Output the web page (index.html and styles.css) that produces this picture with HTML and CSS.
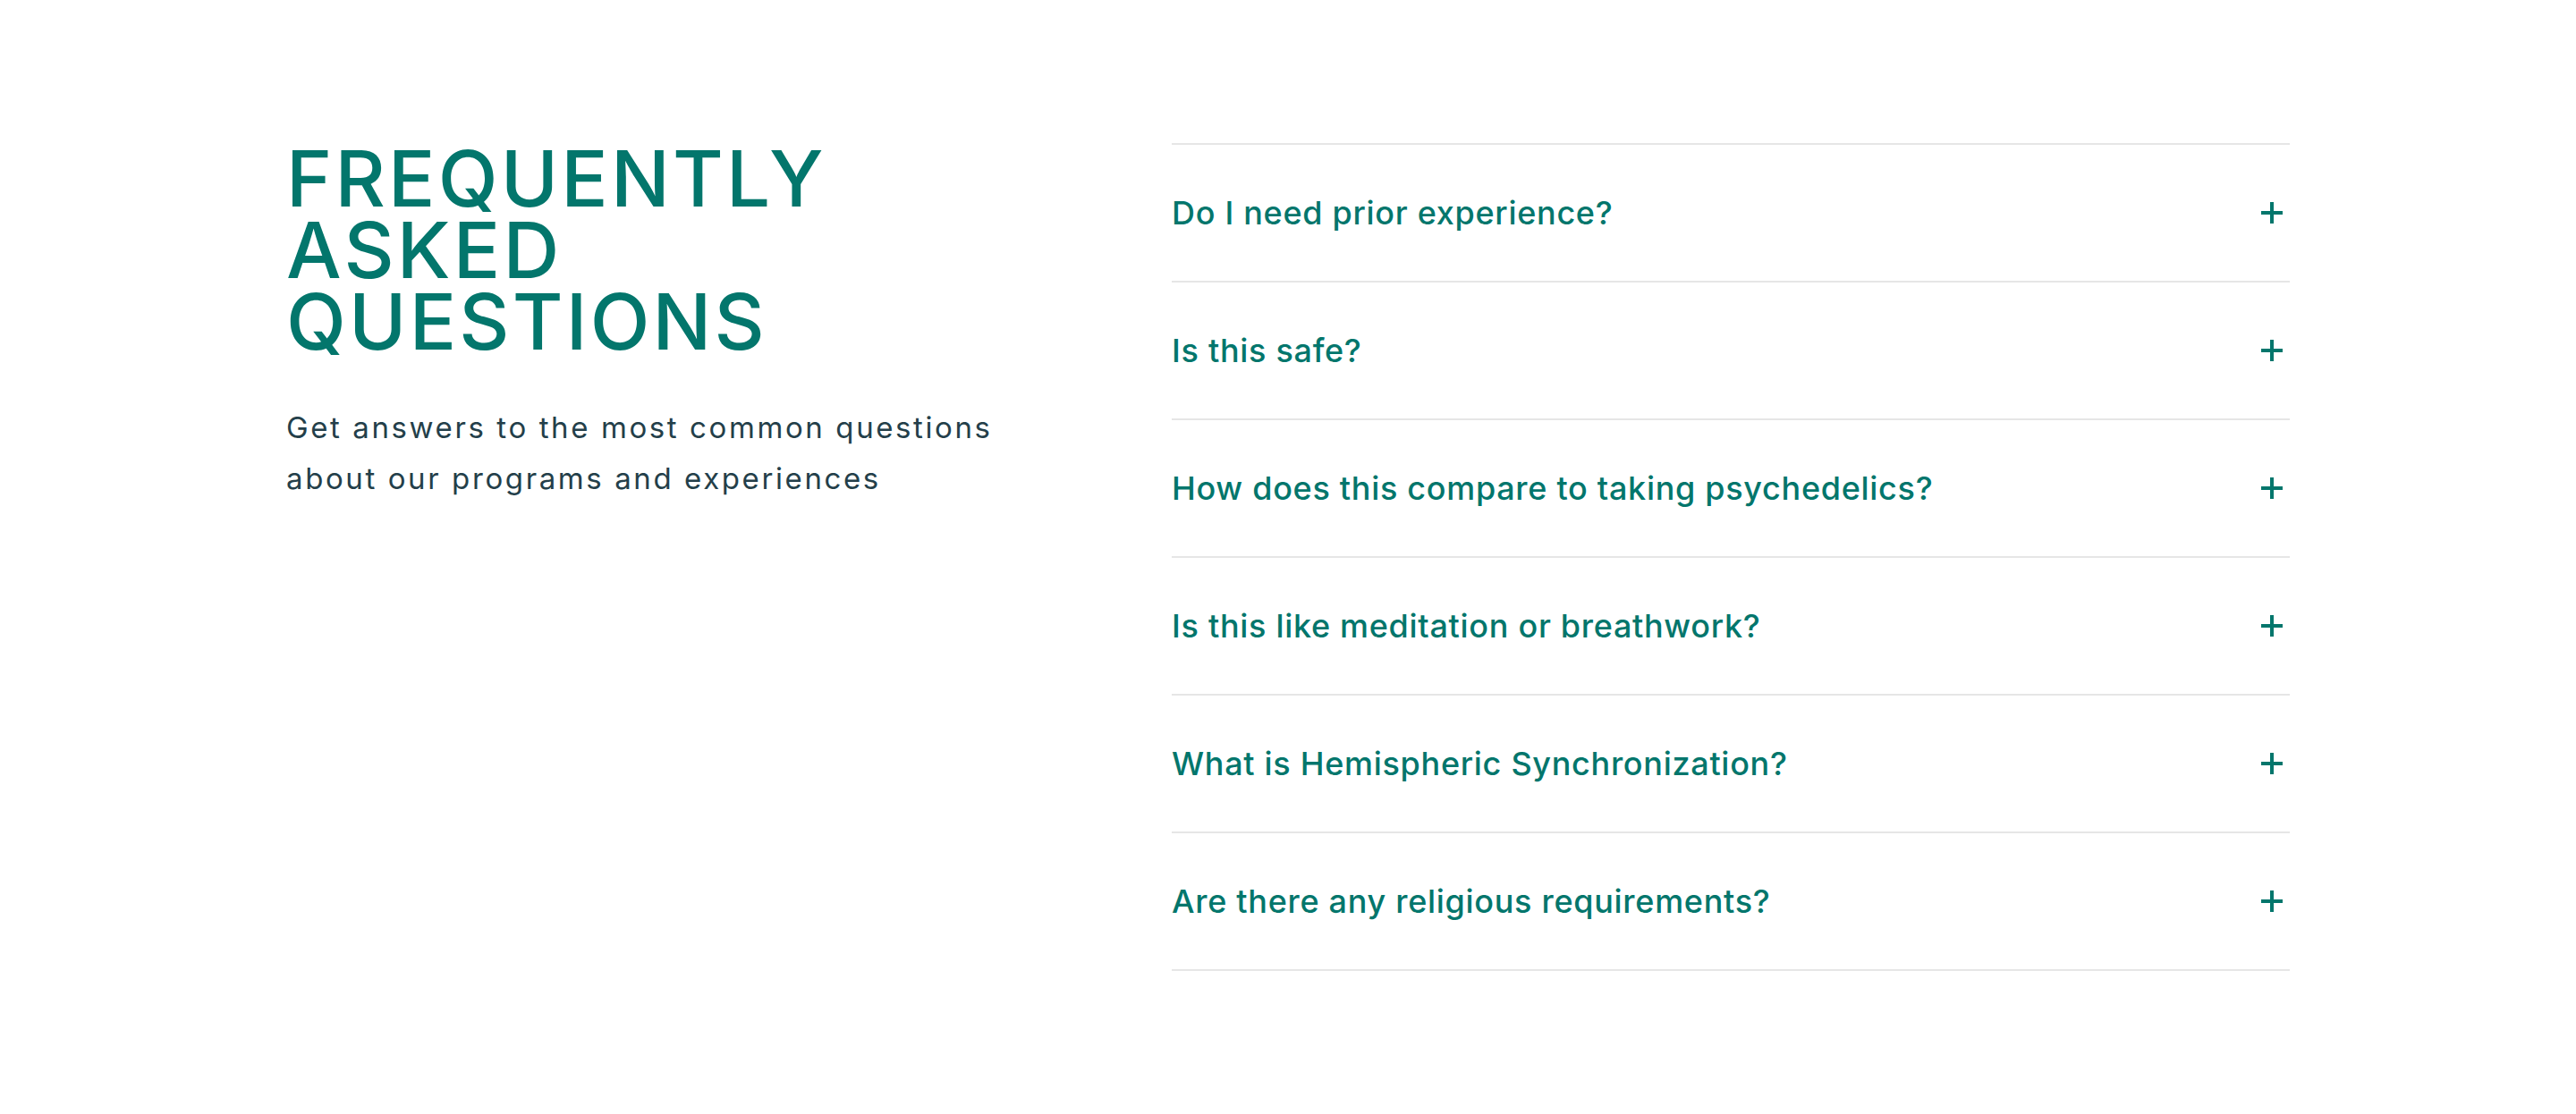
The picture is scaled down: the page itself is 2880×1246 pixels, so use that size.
FILE: index.html
```html
<!DOCTYPE html>
<html lang="en">
<head>
<meta charset="utf-8">
<title>FAQ</title>
<link rel="stylesheet" href="styles.css">
</head>
<body>
<section class="faq">
  <div class="faq-intro">
    <h2 class="faq-title">FREQUENTLY<br>ASKED<br>QUESTIONS</h2>
    <p class="faq-lead">Get answers to the most common questions<br>about our programs and experiences</p>
  </div>
  <ul class="faq-list">
    <li class="faq-item"><span class="faq-q">Do I need prior experience?</span><svg class="faq-plus" viewBox="0 0 24 24"><path d="M12 0v24M0 12h24"/></svg></li>
    <li class="faq-item"><span class="faq-q">Is this safe?</span><svg class="faq-plus" viewBox="0 0 24 24"><path d="M12 0v24M0 12h24"/></svg></li>
    <li class="faq-item"><span class="faq-q">How does this compare to taking psychedelics?</span><svg class="faq-plus" viewBox="0 0 24 24"><path d="M12 0v24M0 12h24"/></svg></li>
    <li class="faq-item"><span class="faq-q">Is this like meditation or breathwork?</span><svg class="faq-plus" viewBox="0 0 24 24"><path d="M12 0v24M0 12h24"/></svg></li>
    <li class="faq-item"><span class="faq-q">What is Hemispheric Synchronization?</span><svg class="faq-plus" viewBox="0 0 24 24"><path d="M12 0v24M0 12h24"/></svg></li>
    <li class="faq-item"><span class="faq-q">Are there any religious requirements?</span><svg class="faq-plus" viewBox="0 0 24 24"><path d="M12 0v24M0 12h24"/></svg></li>
  </ul>
</section>
</body>
</html>
```
FILE: styles.css
```css
* { box-sizing: border-box; }
html, body { margin: 0; padding: 0; background: #ffffff; }
body { font-family: Inter, "Open Sans", sans-serif; }

.faq {
  display: flex;
  align-items: flex-start;
  padding: 160px 320px 0 320px;
  min-height: 1246px;
}
.faq-intro {
  width: 990px;
  flex: none;
}
.faq-title {
  margin: 0;
  font-size: 87px;
  line-height: 80px;
  font-weight: 500;
  color: #03766c;
  letter-spacing: 3.2px;
}
.faq-lead {
  margin: 50px 0 0 0;
  font-size: 33px;
  line-height: 57px;
  font-weight: 400;
  color: #243f4a;
  letter-spacing: 2.6px;
}
.faq-list {
  list-style: none;
  margin: 0;
  padding: 0;
  flex: 1;
  border-bottom: 2px solid #e6e6e6;
}
.faq-item {
  display: flex;
  align-items: center;
  justify-content: space-between;
  border-top: 2px solid #e6e6e6;
  padding: 54px 8px 54px 0;
  height: 154px;
}
.faq-q {
  font-size: 36px;
  line-height: 44px;
  font-weight: 500;
  color: #03766c;
  letter-spacing: 0.7px;
}
.faq-plus {
  width: 24px;
  height: 24px;
  stroke: #03766c;
  stroke-width: 4;
  fill: none;
}
```
